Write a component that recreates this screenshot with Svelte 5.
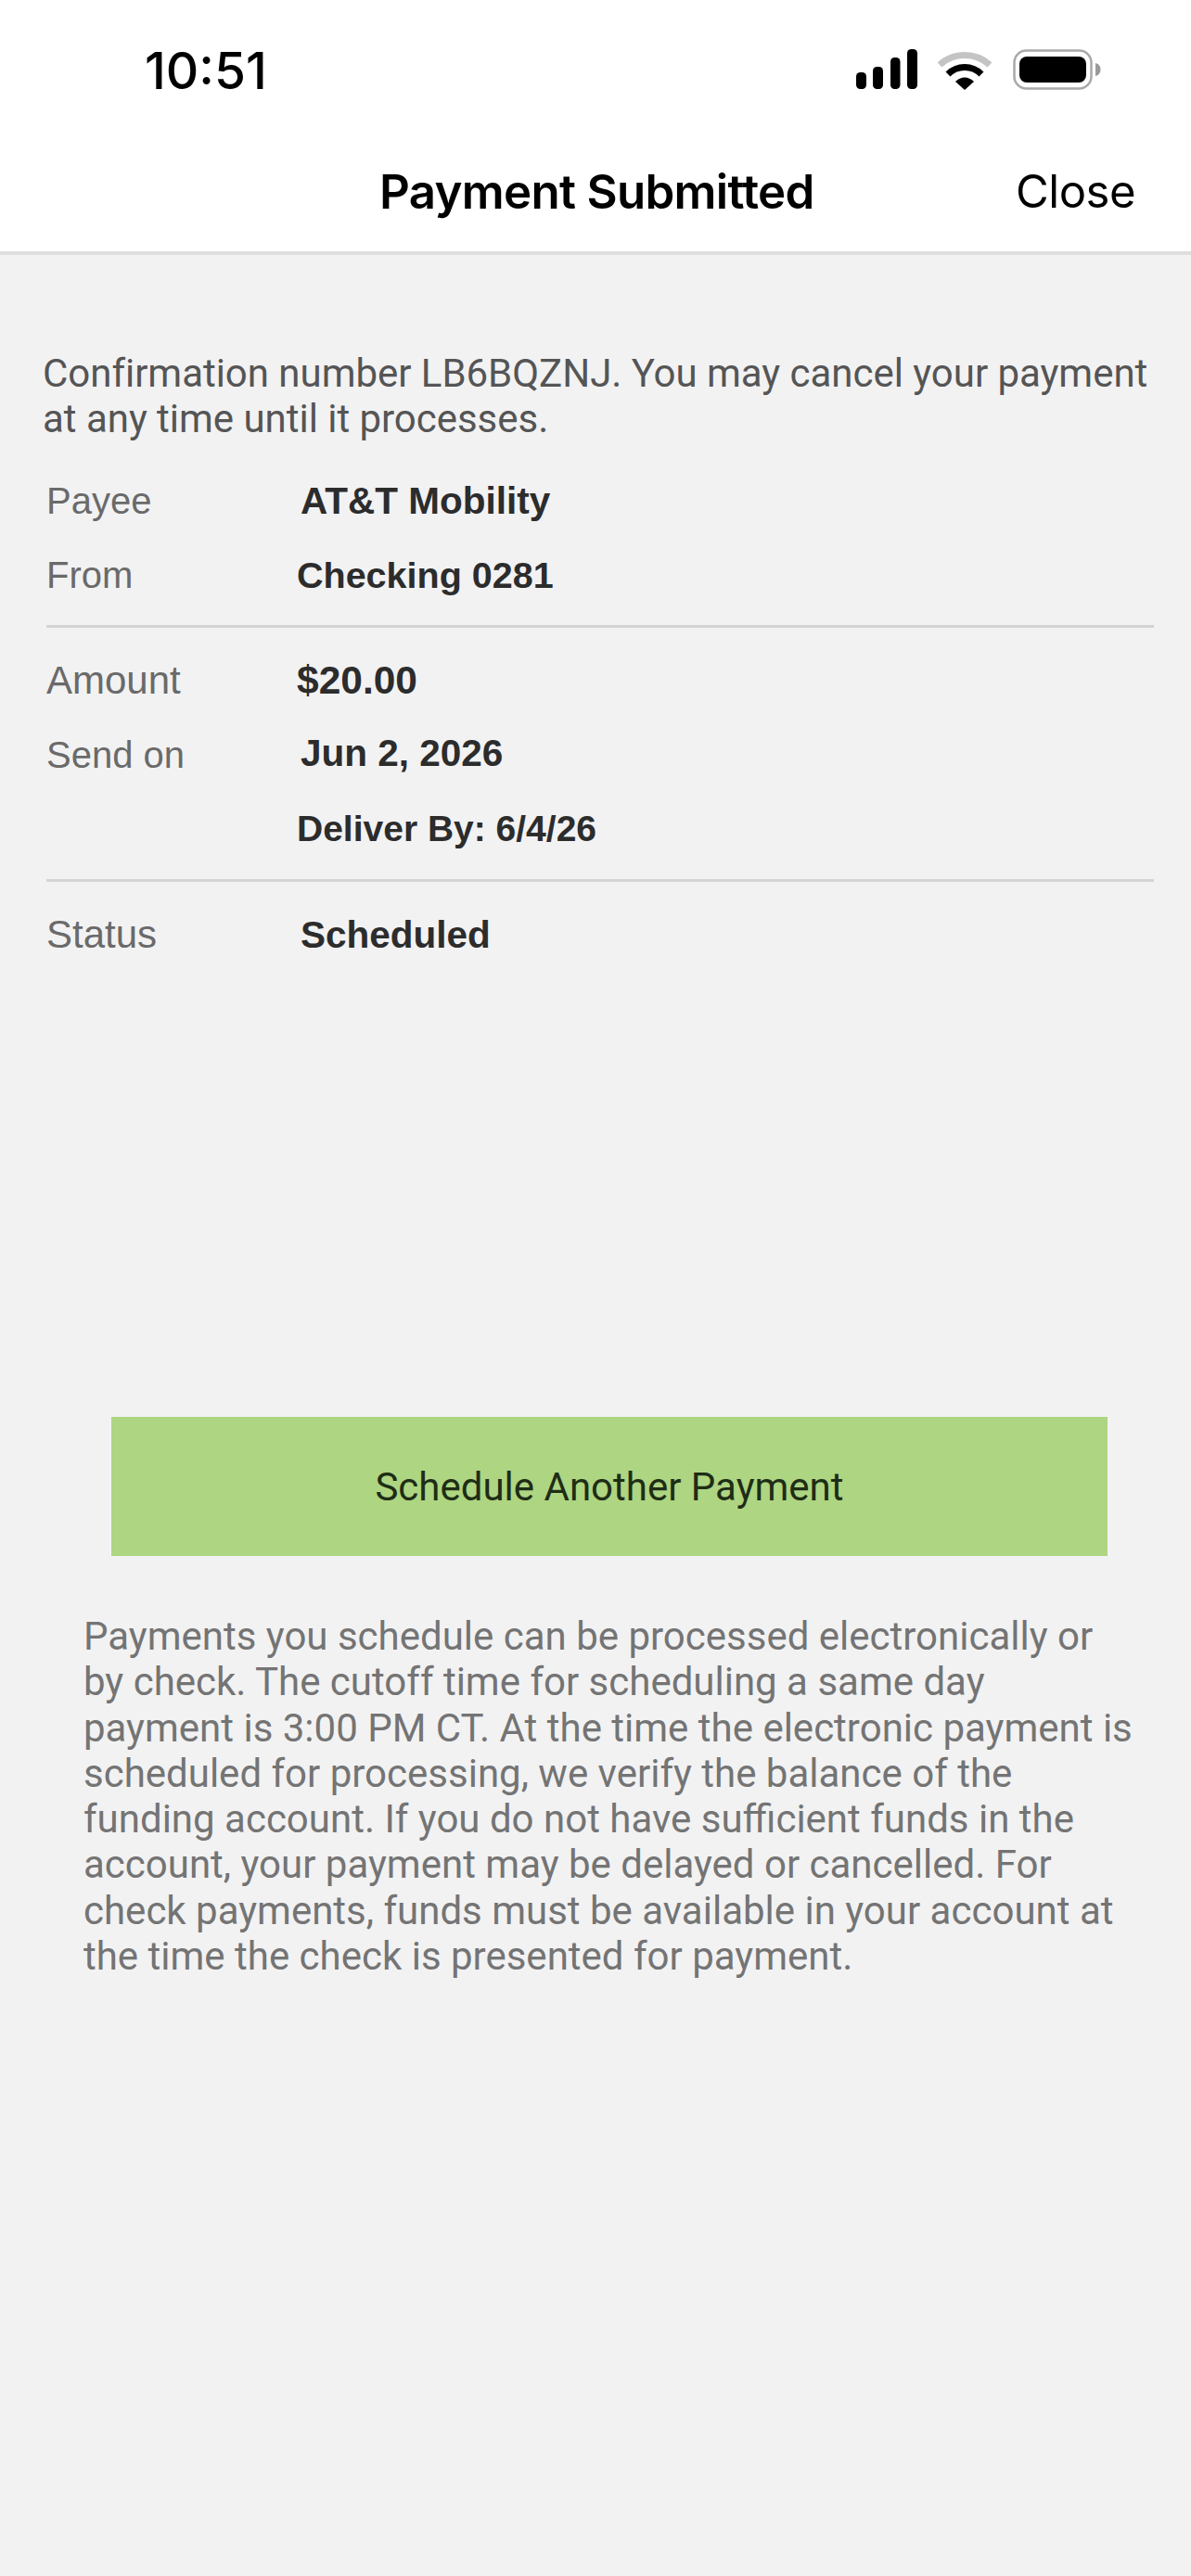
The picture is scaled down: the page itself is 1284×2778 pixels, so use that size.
<script>
  const groups = [
    [
      { label: 'Payee', value: 'AT&T Mobility', nudge: true },
      { label: 'From', value: 'Checking 0281', tight: true }
    ],
    [
      { label: 'Amount', value: '$20.00', wide: true, bigLabel: true },
      { label: 'Send on', value: 'Jun 2, 2026', nudge: true, raise: true },
      { label: '', value: 'Deliver By: 6/4/26', small: true }
    ],
    [{ label: 'Status', value: 'Scheduled', nudge: true, bigLabel: true }]
  ];
</script>

<div class="screen">
  <header class="top">
    <div class="status">
      <span class="time">10:51</span>
      <div class="icons">
        <svg class="signal" width="66" height="44" viewBox="0 0 66 44" aria-hidden="true">
          <rect x="0" y="25" width="11" height="18" rx="4.5" />
          <rect x="18" y="19" width="11" height="24" rx="4.5" />
          <rect x="37" y="9" width="10.5" height="34" rx="4.5" />
          <rect x="55" y="0" width="11" height="43" rx="4.5" />
        </svg>
        <svg class="wifi" width="58" height="42" viewBox="0 0 58 42" aria-hidden="true">
          <path d="M2 15 C17 1 41 1 56 15" fill="none" stroke="#c4c4c4" stroke-width="7" />
          <path d="M11 25 C21 15 37 15 47 25" fill="none" stroke="#000" stroke-width="7" />
          <path d="M19 33 C25 27 33 27 39 33 L29 42 Z" fill="#000" />
        </svg>
        <svg class="battery" width="95" height="44" viewBox="0 0 95 44" aria-hidden="true">
          <rect x="1.5" y="1.5" width="83" height="41" rx="13" fill="none" stroke="#a9a9a9" stroke-width="2.5" />
          <rect x="7" y="8" width="72" height="28" rx="8" fill="#000" />
          <path d="M89 15 C93 16 94.500 19 94.500 22 C94.500 25 93 28 89 29 Z" fill="#9a9a9a" />
        </svg>
      </div>
    </div>
    <div class="nav">
      <h1>Payment Submitted</h1>
      <span class="close">Close</span>
    </div>
  </header>

  <main class="content">
    <p class="intro">Confirmation number LB6BQZNJ. You may cancel your payment at any time until it processes.</p>

    {#each groups as group, i}
      <section class="group" class:ruled={i > 0}>
        {#each group as row}
          <div class="row">
            <span class="label" class:big={row.bigLabel}>{row.label}</span>
            <span class="value" class:nudge={row.nudge} class:raise={row.raise} class:tight={row.tight} class:wide={row.wide} class:small={row.small}>{row.value}</span>
          </div>
        {/each}
      </section>
    {/each}

    <button class="action" type="button">Schedule Another Payment</button>

    <p class="note">Payments you schedule can be processed electronically or by check. The cutoff time for scheduling a same day payment is 3:00 PM CT. At the time the electronic payment is scheduled for processing, we verify the balance of the funding account. If you do not have sufficient funds in the account, your payment may be delayed or cancelled. For check payments, funds must be available in your account at the time the check is presented for payment.</p>
  </main>
</div>

<style>
  :global(body) {
    margin: 0;
    background: #f2f2f3;
  }
  .screen {
    width: 1284px;
    height: 2778px;
    background: #f2f2f3;
    font-family: Roboto, "Liberation Sans", sans-serif;
    overflow: hidden;
  }
  .top {
    height: 271px;
    background: #fff;
    border-bottom: 4px solid #dedede;
    color: #000;
  }
  .status {
    height: 149px;
    display: flex;
    justify-content: space-between;
    padding: 53px 97px 0 156px;
    box-sizing: border-box;
  }
  .time {
    font-family: Inter, sans-serif;
    font-size: 55px;
    font-weight: 500;
    line-height: 46px;
    letter-spacing: 0;
  }
  .icons {
    display: flex;
    align-items: flex-start;
    gap: 22px;
    margin-left: auto;
  }
  .signal { fill: #000; }
  .wifi { margin-top: 2px; }
  .battery { margin-left: 1px; }
  .nav {
    display: flex;
    align-items: center;
    height: 116px;
    padding: 0 60px 0 409px;
    margin-top: -1px;
  }
  h1 {
    margin: 0;
    font-family: Inter, sans-serif;
    font-size: 51px;
    font-weight: 600;
    letter-spacing: -0.7px;
  }
  .close {
    margin-left: auto;
    font-family: Inter, sans-serif;
    font-size: 49px;
    font-weight: 400;
    letter-spacing: -0.5px;
  }
  .content {
    padding: 103px 46px 0;
  }
  .intro {
    margin: 0;
    font-size: 42px;
    line-height: 49px;
    color: #555;
    width: 1200px;
    letter-spacing: -0.03px;
  }
  .group {
    margin: 0 -6px 0 4px;
    padding-bottom: 14px;
  }
  .group:first-of-type { margin-top: 24px; }
  .ruled {
    border-top: 3px solid #d4d4d4;
    padding-top: 17px;
  }
  .row {
    display: flex;
    align-items: center;
    height: 80px;
  }
  .label {
    width: 270px;
    font-family: "Liberation Sans", sans-serif;
    font-size: 40px;
    color: #6a6a6a;
  }
  .big { font-size: 42px; }
  .value {
    font-family: "Liberation Sans", sans-serif;
    font-size: 40.5px;
    font-weight: 700;
    color: #2c2c2c;
  }
  .tight { font-size: 39.5px; }
  .small { font-size: 39px; }
  .wide { font-size: 42.5px; }
  .nudge { margin-left: 4px; }
  .raise { margin-bottom: 4px; }
  .action {
    display: block;
    width: 1074px;
    height: 150px;
    margin: 466px 0 0 74px;
    border: 0;
    border-radius: 0;
    background: #aed581;
    color: #1e2d16;
    font-family: Roboto, sans-serif;
    font-size: 42px;
  }
  .note {
    margin: 62px 0 0 44px;
    width: 1140px;
    font-size: 42px;
    line-height: 49.3px;
    color: #747474;
  }
</style>
